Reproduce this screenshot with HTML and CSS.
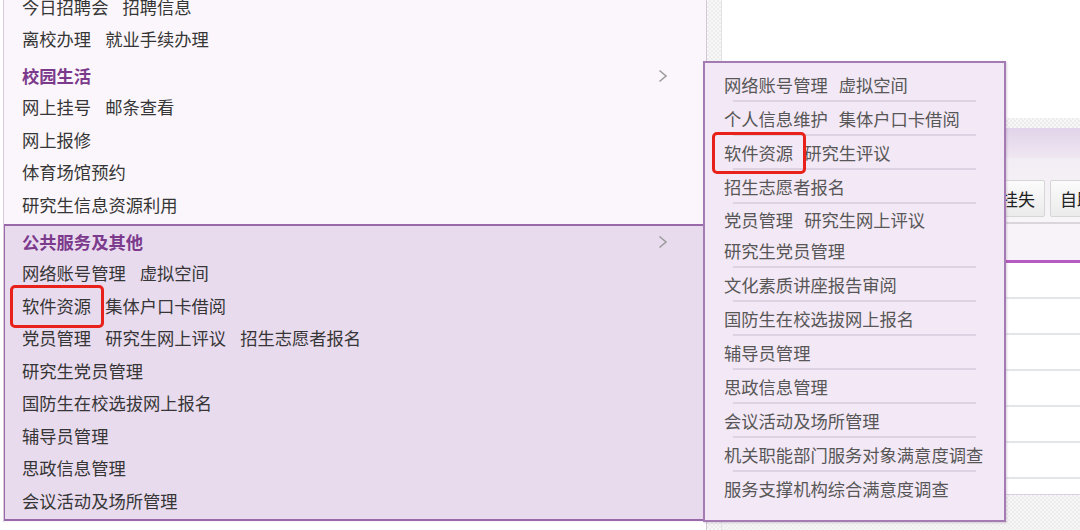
FILE: index.html
```html
<!DOCTYPE html>
<html lang="zh-CN">
    <head>
        <meta charset="UTF-8">
        <meta name="viewport" content="width=device-width, initial-scale=1.0">
        <title>服务菜单</title>
        <link rel="stylesheet" href="styles.css">
    </head>
    <body>
        <div class="page">
            <aside class="sidebar">
                <div class="group first">
                    <div class="links"><a>今日招聘会</a><a>招聘信息</a></div>
                    <div class="links"><a>离校办理</a><a>就业手续办理</a></div>
                </div>

                <div class="group">
                    <div class="group-title">
                        <span>校园生活</span>
                        <svg class="chevron" width="10" height="14" viewBox="0 0 10 14"><polyline points="1.5,1.5 8,7 1.5,12.5"/></svg>
                    </div>
                    <div class="links"><a>网上挂号</a><a>邮条查看</a></div>
                    <div class="links"><a>网上报修</a></div>
                    <div class="links"><a>体育场馆预约</a></div>
                    <div class="links"><a>研究生信息资源利用</a></div>
                </div>

                <div class="group active">
                    <div class="group-title">
                        <span>公共服务及其他</span>
                        <svg class="chevron" width="10" height="14" viewBox="0 0 10 14"><polyline points="1.5,1.5 8,7 1.5,12.5"/></svg>
                    </div>
                    <div class="links"><a>网络账号管理</a><a>虚拟空间</a></div>
                    <div class="links"><a class="mark">软件资源</a><a>集体户口卡借阅</a></div>
                    <div class="links"><a>党员管理</a><a>研究生网上评议</a><a>招生志愿者报名</a></div>
                    <div class="links"><a>研究生党员管理</a></div>
                    <div class="links"><a>国防生在校选拔网上报名</a></div>
                    <div class="links"><a>辅导员管理</a></div>
                    <div class="links"><a>思政信息管理</a></div>
                    <div class="links"><a>会议活动及场所管理</a></div>
                </div>
            </aside>

            <div class="splitter"></div>

            <main class="content">
                <div class="blank"></div>
                <div class="band"></div>
                <div class="titlebar"></div>
                <div class="toolbar">
                    <button class="btn">查询</button>
                    <button class="btn">重置密码</button>
                    <button class="btn">解除冻结</button>
                    <button class="btn">挂失</button>
                    <button class="btn">自助服务</button>
                </div>
                <div class="thead"></div>
                <div class="row"></div>
                <div class="row"></div>
                <div class="row"></div>
                <div class="row"></div>
                <div class="row"></div>
                <div class="row"></div>
                <div class="row last"></div>
                <div class="band foot"></div>
            </main>

            <div class="flyout">
                <div class="fly-group"><a>网络账号管理</a><a>虚拟空间</a></div>
                <div class="fly-group"><a>个人信息维护</a><a>集体户口卡借阅</a></div>
                <div class="fly-group"><a class="mark">软件资源</a><a>研究生评议</a></div>
                <div class="fly-group"><a>招生志愿者报名</a></div>
                <div class="fly-group tight"><a>党员管理</a><a>研究生网上评议</a><a>研究生党员管理</a></div>
                <div class="fly-group"><a>文化素质讲座报告审阅</a></div>
                <div class="fly-group"><a>国防生在校选拔网上报名</a></div>
                <div class="fly-group"><a>辅导员管理</a></div>
                <div class="fly-group"><a>思政信息管理</a></div>
                <div class="fly-group"><a>会议活动及场所管理</a></div>
                <div class="fly-group"><a>机关职能部门服务对象满意度调查</a></div>
                <div class="fly-group"><a>服务支撑机构综合满意度调查</a></div>
            </div>
        </div>
    </body>
</html>
```

FILE: styles.css
```css
body {
    margin: 0;
    font-family: "Noto Sans CJK SC", "Noto Sans", sans-serif;
    font-size: 17.3px;
    background-color: #ffffff;
}

a {
    cursor: pointer;
}

.page {
    position: relative;
    display: flex;
    height: 530px;
    overflow: hidden;
}

/* left menu */

.sidebar {
    flex: none;
    box-sizing: border-box;
    width: 703px;
    height: 522px;
    margin-left: 3px;
    border-left: 1px solid #d9cbdd;
    background-color: #fbf6fb;
    overflow: hidden;
}

.group {
    padding: 1.5px 38px 3px 18px;
}

.group.first {
    margin-top: -12.5px;
    padding-top: 3px;
}

.group.active {
    margin-left: -1px;
    padding: 0 36px 1.5px 17px;
    border: 2px solid #9868a8;
    background-color: #e9dbee;
}

.group-title {
    display: flex;
    justify-content: space-between;
    align-items: center;
    line-height: 31px;
    font-weight: bold;
    color: #7b3a8c;
}

.chevron {
    fill: none;
    stroke: #9c9c9c;
    stroke-width: 1.6;
}

.links {
    display: flex;
    gap: 14px;
    line-height: 32.5px;
    color: #363636;
}

.mark {
    position: relative;
}

.mark::after {
    content: "";
    position: absolute;
    top: -5px;
    bottom: -6px;
    left: -12px;
    right: -13px;
    border: 3px solid #e8221a;
    border-radius: 5px;
}

.splitter {
    flex: none;
    box-sizing: border-box;
    width: 16px;
    border-left: 1px solid #d4c8d8;
    border-right: 1px solid #e4e0e6;
    background: repeating-conic-gradient(#ededed 0 25%, #f8f8f8 0 50%) 0 0 / 4px 4px;
}

/* right content */

.content {
    flex: 1;
    min-width: 0;
    display: flex;
    flex-direction: column;
}

.blank {
    height: 118px;
}

.band {
    height: 10px;
    background: repeating-conic-gradient(#ececec 0 25%, #f7f7f7 0 50%) 0 0 / 4px 4px;
}

.titlebar {
    height: 30px;
    background: linear-gradient(#e1d3e9, #efe7f2);
}

.toolbar {
    display: flex;
    gap: 5px;
    height: 66px;
    padding: 22px 0 0 24px;
    box-sizing: border-box;
    border-bottom: 2px solid #dad5dd;
    background: linear-gradient(#f2edf4, #f7f5f8);
    white-space: nowrap;
    overflow: hidden;
}

.btn {
    flex: none;
    height: 37px;
    padding: 0 9px;
    border: 1px solid #d6d6d6;
    border-radius: 2px;
    background: linear-gradient(#fbfbfb, #ebebeb);
    font-family: inherit;
    font-size: 17px;
    color: #222222;
}

.thead {
    height: 36px;
    border-bottom: 3px solid #b55cc1;
    background-color: #f8f3f9;
}

.row {
    height: 34px;
    border-bottom: 2px solid #e2e5ea;
}

.row.last {
    height: 15px;
    border-bottom: 1px solid #dacfe2;
}

.foot {
    flex: 1;
}

/* flyout submenu */

.flyout {
    position: absolute;
    left: 703px;
    top: 61px;
    width: 303px;
    height: 461px;
    box-sizing: border-box;
    padding: 5px 12px 0 19px;
    border: 2px solid #a57bb3;
    background-color: #f3e8f5;
    box-shadow: 1px 1px 2px rgba(120, 80, 130, 0.25);
}

.fly-group {
    display: flex;
    flex-wrap: wrap;
    column-gap: 11px;
    padding: 1px 0 2px;
    line-height: 31px;
    color: #575757;
    background: linear-gradient(#ddd2e1, #ddd2e1) no-repeat 9px 100% / 243px 2px;
}

.fly-group.tight {
    line-height: 30.5px;
}

.fly-group:last-child {
    background: none;
}
```
